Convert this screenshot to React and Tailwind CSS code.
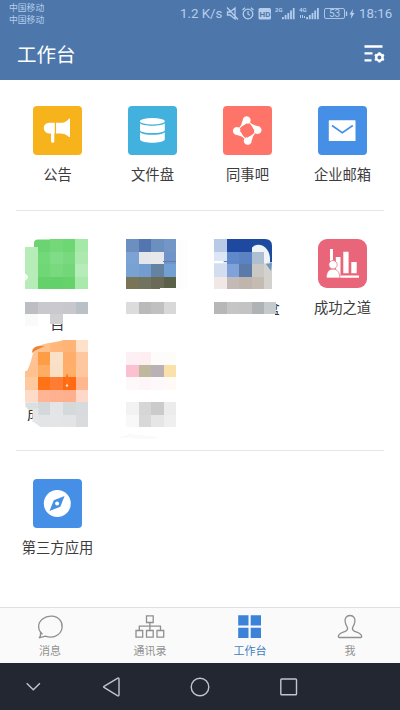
import React from "react";

const CELL = 12.55;

const StatusBar = () => {
  return (
    <div className="flex h-[28px] text-[#b5cdec]">
      <div className="w-[171px] pt-[2px] pl-[9px] text-[8.8px] leading-[12px]">
        <p>中国移动</p>
        <p>中国移动</p>
      </div>
      <div className="flex w-[229px] items-center pl-[9px]">
        <p className="w-[46px] whitespace-nowrap font-[Roboto] text-[13.3px] leading-[28px]">
          1.2 K/s
        </p>
        <svg width="130" height="28" viewBox="0 0 130 28" fill="none" stroke="currentColor">
          {/* muted speaker */}
          <path d="M1.5 12h2.5l5-4v11l-5-4H1.5zM1 7.5l11 12" strokeWidth="1.3" />
          {/* alarm */}
          <circle cx="22" cy="14" r="4.8" strokeWidth="1.3" />
          <path d="M22 11v3.2l2 1M16.5 10l2.5-2.3M27.5 10l-2.5-2.3" strokeWidth="1.2" />
          {/* hd */}
          <rect x="32.5" y="8" width="12.5" height="11.5" rx="1.5" fill="currentColor" stroke="none" />
          <text x="33.6" y="16.8" fontSize="8" fontWeight="bold" fontFamily="Roboto" fill="#4d77aa" stroke="none">HD</text>
          {/* signals */}
          <g fill="currentColor" stroke="none" fontFamily="Roboto" fontWeight="bold">
            <text x="49" y="12" fontSize="6">2G</text>
            <text x="73" y="12" fontSize="6">4G</text>
            <path d="M56 17h1.8v2.2h-1.8zM58.7 15h1.8v4.2h-1.8zM61.4 13h1.8v6.2h-1.8zM64.1 10.5h1.8v8.7h-1.8zM66.8 8h1.8v11.2h-1.8z" />
            <path d="M80.2 17h1.8v2.2h-1.8zM82.9 15h1.8v4.2h-1.8zM85.6 13h1.8v6.2h-1.8zM88.3 10.5h1.8v8.7h-1.8zM91 8h1.8v11.2h-1.8z" />
            <path d="M74 15h1v3h-1zM76 15h1v3h-1zM78 16h1v2h-1z" />
          </g>
          {/* battery */}
          <rect x="98.5" y="8.5" width="20" height="10" rx="1.5" strokeWidth="0.9" />
          <text x="103" y="17.2" fontSize="10" fontFamily="Roboto" fill="currentColor" stroke="none">53</text>
          <path d="M120.5 11.5v4.5" strokeWidth="1.4" />
          <path d="M127 9l-3.6 5.5h2l-.7 4.5 3.8-6h-2z" fill="currentColor" stroke="none" />
        </svg>
        <p className="pl-[3px] font-[Roboto] text-[13.3px] leading-[28px]">18:16</p>
      </div>
    </div>
  );
};

const Header = () => {
  return (
    <header className="h-[80px] bg-[#4d77aa]">
      <StatusBar />
      <div className="flex h-[52px] items-center justify-between pr-[15px] pl-[17px]">
        <h1 className="text-[19.5px] leading-[52px] text-white">工作台</h1>
        <svg className="size-[21px]" viewBox="0 0 21 21" fill="none" stroke="#fff">
          <path d="M0.5 2.5h18M0.5 9.3h8M0.5 16.3h7" strokeWidth="2.3" />
          <circle cx="15.4" cy="13.4" r="3.2" strokeWidth="2.4" />
          <path d="M15.4 8.2v1.8M15.4 16.8v1.8M10.9 10.8l1.5.9M18.4 15.1l1.5.9M10.9 16l1.5-.9M18.4 11.7l1.5-.9" strokeWidth="2.2" />
        </svg>
      </div>
    </header>
  );
};

const icons = {
  notice: (
    <>
      <path d="M21.8 16.8v10.6H16a5.3 5.3 0 0 1 0-10.6zM18 27h3.3v8.2a1.6 1.6 0 0 1-3.3 0z" />
      <path d="M23 16.8h4.6c3 0 5.8-1.3 8.2-3.9.6-.5 1.2-.3 1.2.4v17.1c0 .7-.6.9-1.2.4-2.4-2.3-5.2-3.4-8.2-3.4H23z" />
    </>
  ),
  disk: (
    <>
      <ellipse cx="24.4" cy="15.3" rx="12.4" ry="3.2" />
      <path d="M12 17.2c2 3.3 22.8 3.3 24.8 0v7.2c-2 3.5-22.8 3.5-24.8 0z" />
      <path d="M12 26.2c2 3.4 22.8 3.4 24.8 0v7.3c-2 4.3-22.8 4.3-24.8 0z" />
    </>
  ),
  colleague: (
    <>
      {[0, 90, 180, 270].map((deg) => (
        <path
          key={deg}
          transform={`rotate(${deg} 24.2 24.5)`}
          d="M15.5 22.5Q18.8 19.5 19.7 14.3A4 4 0 1 1 25.8 17.6Q20.5 18.3 16.2 23z"
        />
      ))}
      <path d="M23.5 17.2l8 6.8-6.8 7.8-8-6.8z" fill="#ff7468" />
    </>
  ),
  mail: (
    <>
      <rect x="10.8" y="14.3" width="26.7" height="20.7" rx=".6" />
      <path d="M14 19.5l10.3 7.2 10.5-7.2" fill="none" stroke="#4590e6" strokeWidth="1.6" />
    </>
  ),
  success: (
    <>
      <path d="M12 10h3v12h-3zM17.8 18h4.7v18h-4.7zM25.3 12.8h5.3v21.5h-5.3zM33.3 23h5.4v11.3h-5.4zM18 36.4h23v2.4H18z" />
      <path d="M8.3 39c0-5.8 2.6-9 6.7-9s6.7 3.2 6.9 9z" stroke="#e9657a" strokeWidth=".7" />
      <circle cx="15" cy="25.7" r="4.2" stroke="#e9657a" strokeWidth=".7" />
    </>
  ),
  compass: (
    <>
      <circle cx="24.3" cy="24.5" r="13.5" />
      <path d="M16.5 32l4.3-10.8 10.8-4.3-4.3 10.8z" fill="#4590e6" />
      <circle cx="24.1" cy="24.5" r="2" />
    </>
  ),
};

const AppTile = ({ icon, label, bg }) => {
  return (
    <div className="flex flex-col items-center">
      <svg className={`size-[49px] ${bg}`} viewBox="0 0 49 49" fill="#fff">
        {icons[icon]}
      </svg>
      <p className="mt-[8px] text-[14.3px] leading-[21px] whitespace-nowrap text-[#3c3c3c]">
        {label}
      </p>
    </div>
  );
};

const Cells = ({ x, y, rows }) => {
  return rows.map((row, r) =>
    row.map(
      (color, c) =>
        color && (
          <rect
            key={`${r}-${c}`}
            x={x + c * CELL}
            y={y + r * CELL}
            width={CELL}
            height={CELL}
            fill={color}
          />
        )
    )
  );
};

// tile whose icon and name are pixelated, only bits of the name stay readable
const MaskedTile = ({ label, labelClass, children }) => {
  return (
    <div className="relative h-[100px]">
      {label && (
        <p className={`text-[14.3px] leading-[18px] text-[#333] ${labelClass}`}>{label}</p>
      )}
      <svg
        className="absolute top-0 left-0"
        width="95"
        height="100"
        viewBox="0 0 95 100"
        shapeRendering="crispEdges"
      >
        {children}
      </svg>
    </div>
  );
};

const TopApps = () => {
  return (
    <section className="mx-[10px] grid h-[130px] grid-cols-4 pt-[26px]">
      <AppTile icon="notice" label="公告" bg="rounded-[4px] bg-[#f6b31b]" />
      <AppTile icon="disk" label="文件盘" bg="rounded-[4px] bg-[#42b1de]" />
      <AppTile icon="colleague" label="同事吧" bg="rounded-[4px] bg-[#ff7468]" />
      <AppTile icon="mail" label="企业邮箱" bg="rounded-[4px] bg-[#4590e6]" />
    </section>
  );
};

const CompanyApps = () => {
  return (
    <section className="mx-[10px] grid h-[239px] grid-cols-4 grid-rows-[100px_100px] pt-[28px]">
      <MaskedTile label="目" labelClass="pt-[75px] text-center">
        <path d="M24 9V4q0-3.5 4-3.5h50V50H24z" fill="#6cd372" shapeRendering="auto" />
        <path d="M15.3 8h12.5v42H15.3z" fill="#b5ecb8" />
        <path d="M15.3 34l3 4-3 4z" fill="#fff" shapeRendering="auto" />
        <Cells
          x={27.8}
          y={0}
          rows={[
            [null, "#74d878", "#6fd674", "#a5e9a8"],
            ["#72d878", "#80dc86", "#78d97e", "#ade9af"],
            ["#70d777", "#78d97d", "#73d779", "#b5ecb7"],
            ["#65d16b", "#63d169", "#65d26b", "#a9e9ab"],
          ]}
        />
        <rect x="39" y="74" width="15" height="11" fill="#fff" />
        <Cells x={15.3} y={62.5} rows={[["#bdbec3", "#c9c9cd", "#cacace", "#c7c7cc", "#b9c0c6"]]} />
        <rect x="40.3" y="74.5" width="12.5" height="10" fill="#d0d0d2" />
        <rect x="15.3" y="75" width="12.5" height="12" fill="#fafafa" />
      </MaskedTile>

      <MaskedTile>
        <Cells
          x={21}
          y={0}
          rows={[
            ["#6c8fc0", "#5575b1", "#6b8fbe", "#7296c6"],
            ["#7da3d4", "#e4e6ec", "#e8e8eb", "#7094c9"],
            ["#78a2d1", "#739dd0", "#6483a1", "#73a0d3"],
            ["#7a7456", "#6f7360", "#6b6a58", "#5b6049"],
          ]}
        />
        <path d="M58 22.5h13" stroke="#5f7caa" shapeRendering="auto" />
        <path d="M55 48.5h17v2H55z" fill="#fff" />
        <rect x="72" y="1" width="11" height="49" fill="#fdfdfd" />
        <Cells x={21} y={62.5} rows={[["#dcdcdc", "#bababa", "#c0c0c0", "#d8d8d8"]]} />
      </MaskedTile>

      <MaskedTile label="盒" labelClass="pt-[60px] pl-[65.5px]">
        <g shapeRendering="auto">
          <path d="M50 0h15q7 0 7 7v20H50z" fill="#1d4c9e" />
          <path d="M51 10c6-9 19-3 19 10v8H51z" fill="#eef4f7" />
          <path d="M50 26l12-1 10-2v27H62V26l-12 5z" fill="#d4d2ce" />
          <path d="M66 25l5 7 1-8z" fill="#6e96c3" />
        </g>
        <Cells
          x={14}
          y={0}
          rows={[
            ["#b9cae7", "#1f49a0", "#1f499f"],
            ["#dce6f4", "#6089cb", "#5b83c4", "#aebfd1"],
            ["#d2def0", "#7fa2d8", "#5a7ba9", "#cac8c5"],
            ["#f0e7e6", "#c3b9b6", "#bfb5ad", "#c4bcb0"],
          ]}
        />
        <path d="M14 23h9" stroke="#fff" strokeWidth="2" />
        <path d="M24 22.5h14" stroke="#5d85c5" shapeRendering="auto" />
        <rect x="62" y="60" width="13" height="20" fill="#fff" />
        <Cells x={14} y={62.5} rows={[["#b7b7b7", "#c5c5c5", "#c3c3c3", "#afb3b5"]]} />
        <rect x="64" y="62.5" width="12" height="12.5" fill="#c5cacc" />
      </MaskedTile>

      <AppTile icon="success" label="成功之道" bg="rounded-[9px] bg-[#e9657a]" />

      <MaskedTile label="成" labelClass="pt-[66px] pl-[17px]">
        <Cells
          x={15.3}
          y={0.5}
          rows={[
            ["#ffc695", "#ffc18c", "#ffb77b", "#ffb477", "#ffe0cb"],
            ["#ffc393", "#ff9c46", "#f8e0c9", "#ffad6a", "#ffc79f"],
            ["#ffc18e", "#ffac65", "#f9dfc4", "#ffaf6a", "#ffc79d"],
            ["#ffc9a0", "#ff7316", "#ff7d33", "#ff6a13", "#ffb78f"],
            ["#fedac8", "#ffb494", "#ffb18f", "#ffaf8c", "#fed9c9"],
            [null, "#d5d8da", "#e3e5e6", "#d4d9dc", "#d8dbdd"],
            [null, "#e2e4e5", "#e3e5e6", "#e3e4e5", "#dadbdd"],
          ]}
        />
        <g shapeRendering="auto">
          <path d="M15.3 63.2h12.6v7l-9 1-3.6-4z" fill="#dcdfe0" />
          <path d="M22.5 70l6-1v19q-4-2-6-5z" fill="#e4e6e7" />
          <path d="M14 0h42c-9 4-20 3-30 8-4 5-4 15-9 24h-3z" fill="#fff" />
          <path d="M22 14q0-7 8-7l5 .5q-8 2-13 6.5z" fill="#ed8235" />
          <path d="M57 34q-3 9 0 11t2-5z" fill="#ff7316" />
          <circle cx="57" cy="46.5" r="1.2" fill="#ffe6cb" />
          <path d="M14 82l8 0 10 7H14z" fill="#fff" />
        </g>
      </MaskedTile>

      <MaskedTile>
        <Cells
          x={21}
          y={13}
          rows={[
            ["#fdf0f4", "#fdeef2", "#fefbfb", "#fefcf9"],
            ["#fbc1d1", "#beb89f", "#bab1b7", "#fae0a9"],
            ["#fef9f9", "#fdf5f8", "#fcf8fb", "#fffaf6"],
            [],
            ["#f2f2f2", "#d6d6d6", "#cbcbcb", "#ececec"],
            ["#f8f8f8", "#d8d8d8", "#e6e6e6", "#efefef"],
          ]}
        />
        <path d="M12 99l12-4 30 3-6 2z" fill="#fafafa" />
      </MaskedTile>
    </section>
  );
};

const tabs = [
  {
    label: "消息",
    icon: (
      <path d="M5.5 19.2C.5 15 .2 8 5.5 3.9c5.2-4 13.5-3.5 17.2.8 3.8 4.4 3.2 11.3-1.8 15-3.8 2.8-8.4 3-12.5 1.4L2 22.8c1.5-1 1.8-2.2 1.6-5.3" />
    ),
  },
  {
    label: "通讯录",
    icon: (
      <path d="M9.5.8h6.7v6.7H9.5zM12.9 7.5v8M2.3 15.5v-4.3h21.2v4.3M-1 15.5h6.7v6.7H-1zM9.5 15.5h6.7v6.7H9.5zM20 15.5h6.7v6.7H20z" />
    ),
  },
  {
    label: "工作台",
    active: true,
    icon: <path d="M1.2.2h10.3v10.3H1.2zM13.7.2H24v10.3H13.7zM1.2 12.7h10.3V23H1.2zM13.7 12.7H24V23H13.7z" fill="#3b82d8" stroke="none" />,
  },
  {
    label: "我",
    icon: (
      <path d="M13 .5c-3.8 0-5.3 2.8-4.9 6 .3 2.5 1.5 4.7 2.3 6 .5 1.8-.2 3-2 3.800-3.4 1.5-6.900 2-7.100 5.200 0 .7.3 1 1 1h21.400c.7 0 1-.3 1-1-.2-3.200-3.700-3.700-7.100-5.200-1.800-.8-2.500-2-2-3.800.8-1.300 2-3.500 2.300-6 .4-3.200-1.100-6-4.900-6z" />
    ),
  },
];

const TabBar = () => {
  return (
    <nav className="grid h-[56px] grid-cols-4 border-t border-[#dfdfdf] bg-[#fafafa]">
      {tabs.map((tab) => (
        <div key={tab.label} className="flex flex-col items-center pt-[7px]">
          <svg
            className="h-[24px] w-[26px] overflow-visible"
            viewBox="0 0 26 24"
            fill="none"
            stroke="#8f8f8f"
            strokeWidth="1.3"
          >
            {tab.icon}
          </svg>
          <p
            className={`mt-[3px] text-[11px] leading-[16px] ${
              tab.active ? "text-[#3f7fbd]" : "text-[#929292]"
            }`}
          >
            {tab.label}
          </p>
        </div>
      ))}
    </nav>
  );
};

const SystemNav = () => {
  return (
    <div className="grid h-[47px] grid-cols-[78px_89px_89px_20px] items-center bg-[#222731] pl-[23px]">
      {[
        <path key="down" d="M3.7 6.3l6.6 6.5 6.6-6.5" />,
        <path key="back" d="M3 10.4q-.7-.5 0-1L16.4 1.3q1.6-.8 1.6.8v15.7q0 1.6-1.6.8z" />,
        <circle key="home" cx="10" cy="10" r="8.8" />,
        <rect key="recent" x="1.8" y="2" width="15.7" height="15.7" rx=".8" />,
      ].map((shape) => (
        <svg key={shape.key} className="size-[20px]" viewBox="0 0 20 20" fill="none" stroke="#c1c5cc" strokeWidth="1.4">
          {shape}
        </svg>
      ))}
    </div>
  );
};

const App = () => {
  return (
    <div className="flex h-[710px] w-[400px] flex-col overflow-hidden bg-white font-['Noto_Sans_CJK_SC',sans-serif]">
      <Header />
      <TopApps />
      <div className="mx-[16px] h-px bg-[#e6e6e6]" />
      <CompanyApps />
      <div className="mx-[16px] h-px bg-[#e6e6e6]" />
      <section className="mx-[10px] grid flex-1 grid-cols-4 pt-[28px]">
        <AppTile icon="compass" label="第三方应用" bg="rounded-[4px] bg-[#4590e6]" />
      </section>
      <TabBar />
      <SystemNav />
    </div>
  );
};

export default App;
